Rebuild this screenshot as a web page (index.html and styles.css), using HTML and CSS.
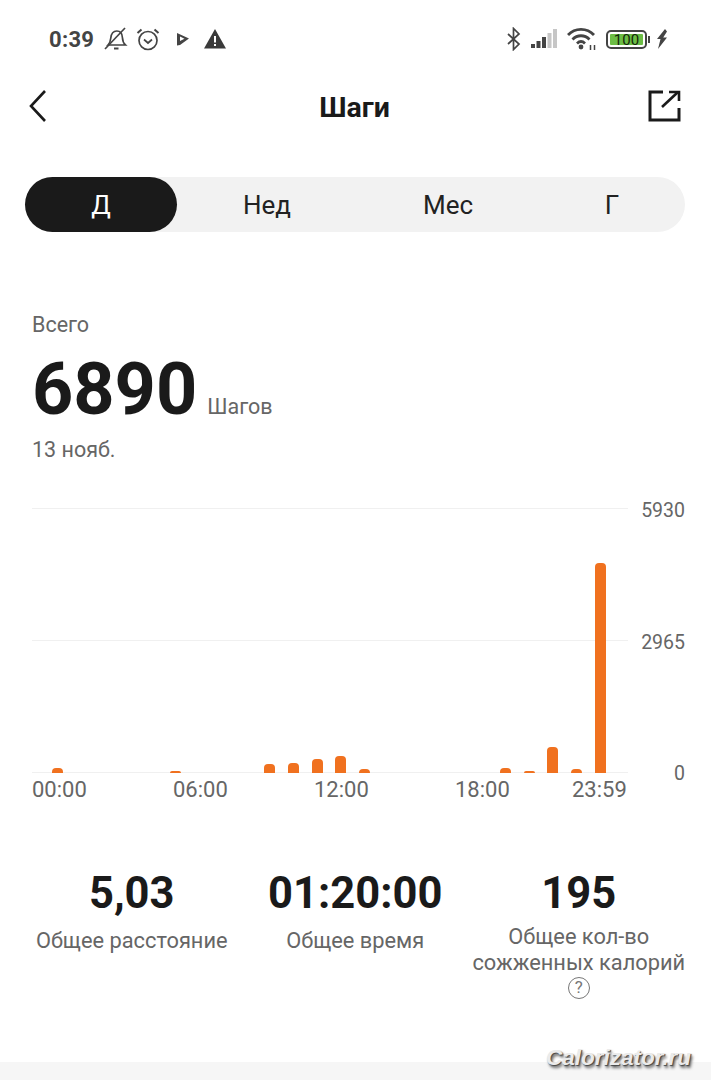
FILE: index.html
```html
<!doctype html>
<html lang="ru">
<head>
  <meta charset="UTF-8">
  <meta name="viewport" content="width=device-width, initial-scale=1.0">
  <title>Шаги</title>
  <link rel="stylesheet" href="styles.css">
</head>
<body>
  <div class="phone">
    <!-- status bar -->
    <div class="status">
      <div class="status-left">
        <span class="clock">0:39</span>
        <svg class="ic-bell" width="24" height="26" viewBox="0 0 24 26" fill="none" stroke="#444" stroke-width="1.7">
          <path d="M4 19c2-2 2.500-4 2.800-7 .4-4 2.400-7 6-7 3.400 0 5.400 2.800 5.600 6.500.2 3.500 1 5.700 3 7.500z"/>
          <path d="M1 23L21 2"/>
          <path d="M10 22.500h4.500" stroke-width="2"/>
        </svg>
        <svg class="ic-alarm" width="24" height="24" viewBox="0 0 24 24" fill="none" stroke="#444" stroke-width="1.7">
          <circle cx="12" cy="13.500" r="9"/>
          <path d="M8 12.500l4 3.500 4-3.500"/>
          <path d="M1.500 6l4-3.500M22.500 6l-4-3.500" stroke-width="2"/>
        </svg>
        <svg class="ic-play" width="12" height="14" viewBox="0 0 12 14">
          <path d="M0 1l12 5.500L3 13l-3 .5zM3 4.500v4.500l4.500-2.300z" fill="#444" fill-rule="evenodd"/>
        </svg>
        <svg class="ic-warn" width="22" height="20" viewBox="0 0 22 20">
          <path d="M11 0l11 19.500H0z" fill="#3a3a3a"/>
          <path d="M10 7h2v6.500h-2zM10 15h2v2h-2z" fill="#fff"/>
        </svg>
      </div>
      <div class="status-right">
        <svg class="ic-bt" width="16" height="24" viewBox="0 0 16 24" fill="none" stroke="#444" stroke-width="1.700">
          <path d="M2 7l11 10-5.500 5.500v-21L13 7 2 17"/>
        </svg>
        <svg class="ic-signal" width="26" height="20" viewBox="0 0 26 20">
          <rect x="0" y="15" width="4" height="4" fill="#444"/>
          <rect x="5.500" y="12" width="4" height="7" fill="#444"/>
          <rect x="11" y="8" width="4" height="11" fill="#444"/>
          <rect x="16.500" y="4" width="4" height="15" fill="#c6c6c6"/>
          <rect x="22" y="0" width="4" height="19" fill="#c6c6c6"/>
        </svg>
        <svg class="ic-wifi" width="30" height="24" viewBox="0 0 30 24" fill="none" stroke="#444" stroke-width="2.800">
          <path d="M1 8c7-7.500 19-7.500 26 0"/>
          <path d="M5.500 12.500c4.800-5 12.200-5 17 0"/>
          <path d="M10 16.500c2.500-2.400 5.500-2.400 8 0"/>
          <circle cx="14" cy="20" r="2.400" fill="#444" stroke="none"/>
          <path d="M23.500 23v-5M27.500 23v-5" stroke-width="1.500"/>
        </svg>
        <div class="battery">
          <div class="battery-body"><span class="battery-fill">100</span></div>
          <div class="battery-tip"></div>
        </div>
        <svg class="ic-bolt" width="12" height="20" viewBox="0 0 12 20">
          <path d="M9 0L1 10h3.500L2 20l9-11.500H7.200L11 2.500z" fill="#444"/>
        </svg>
      </div>
    </div>

    <!-- title bar -->
    <div class="header">
      <svg class="ic-back" width="20" height="34" viewBox="0 0 20 34" fill="none" stroke="#1a1a1a" stroke-width="2.600">
        <path d="M17 2L3 17l14 15"/>
      </svg>
      <h1 class="title">Шаги</h1>
      <svg class="ic-share" width="34" height="34" viewBox="0 0 34 34" fill="none" stroke="#1a1a1a" stroke-width="3">
        <path d="M16 3H3v28h29V19"/>
        <path d="M15 18L31 3" stroke-width="2.600"/>
        <path d="M22 3h10v9" stroke-width="2.600"/>
      </svg>
    </div>

    <!-- period tabs -->
    <div class="tabs">
      <div class="tab tab-active">Д</div>
      <div class="tab tab-week">Нед</div>
      <div class="tab tab-month">Мес</div>
      <div class="tab tab-year">Г</div>
    </div>

    <div class="summary">
      <div class="summary-label">Всего</div>
      <div class="summary-main">
        <span class="summary-value">6890</span>
        <span class="summary-unit">Шагов</span>
      </div>
      <div class="summary-date">13 нояб.</div>
    </div>

    <!-- chart -->
    <div class="chart">
      <div class="plot">
        <div class="gridlines">
          <div class="gridline"></div>
          <div class="gridline"></div>
          <div class="gridline"></div>
        </div>
        <div class="bars" id="bars"></div>
      </div>
      <div class="y-axis">
        <span>5930</span>
        <span>2965</span>
        <span>0</span>
      </div>
    </div>
    <div class="x-axis">
      <span>00:00</span>
      <span>06:00</span>
      <span>12:00</span>
      <span>18:00</span>
      <span>23:59</span>
    </div>

    <!-- totals -->
    <div class="stats">
      <div class="stat">
        <div class="stat-value">5,03</div>
        <div class="stat-label">Общее расстояние</div>
      </div>
      <div class="stat">
        <div class="stat-value">01:20:00</div>
        <div class="stat-label">Общее время</div>
      </div>
      <div class="stat">
        <div class="stat-value">195</div>
        <div class="stat-label stat-label-long">Общее кол-во<br>сожженных калорий</div>
        <div class="help">?</div>
      </div>
    </div>

    <div class="footer">
      <span class="watermark">Calorizator.ru</span>
    </div>
  </div>

  <script>
    // steps per hour, drawn in px
    const hours = [5, 0, 0, 0, 0, 2, 0, 0, 0, 9, 10, 14, 17, 4, 0, 0, 0, 0, 0, 5, 2, 26, 4, 210];
    const bars = document.getElementById("bars");

    hours.forEach((h) => {
      const slot = document.createElement("div");
      slot.className = "slot";
      if (h > 0) {
        const bar = document.createElement("div");
        bar.className = "bar";
        bar.style.height = h + "px";
        slot.appendChild(bar);
      }
      bars.appendChild(slot);
    });
  </script>
</body>
</html>
```

FILE: styles.css
```css
* {
  box-sizing: border-box;
}

body {
  margin: 0;
  background-color: #fff;
  color: #1a1a1a;
  font-family: Roboto, "Noto Sans", sans-serif;
}

.phone {
  position: relative;
  width: 711px;
  height: 1080px;
  overflow: hidden;
  display: flex;
  flex-direction: column;
}

/* status bar */
.status {
  height: 78px;
  padding: 0 43px 0 49px;
  display: flex;
  justify-content: space-between;
  align-items: center;
}

.status-left, .status-right {
  display: flex;
  align-items: center;
}

.clock {
  font-size: 22px;
  font-weight: 700;
  color: #444;
  letter-spacing: 0.3px;
}

.ic-bell { margin-left: 10px; }
.ic-alarm { margin-left: 8px; }
.ic-play { margin-left: 17px; }
.ic-warn { margin-left: 15px; }
.ic-signal { margin-left: 9px; }
.ic-wifi { margin-left: 10px; }
.ic-bolt { margin-left: 6px; }

.battery {
  display: flex;
  align-items: center;
  margin-left: 9px;
}

.battery-body {
  width: 41px;
  height: 19px;
  padding: 2px;
  border: 2px solid #444;
  border-radius: 5px;
  display: flex;
}

.battery-fill {
  flex: 1;
  background-color: #6cbd45;
  border-radius: 1px;
  font-size: 15px;
  line-height: 12px;
  text-align: center;
  color: #12280a;
}

.battery-tip {
  width: 2px;
  height: 7px;
  margin-left: 1px;
  background-color: #444;
}

/* title bar */
.header {
  height: 56px;
  padding: 0 30px 0 28px;
  display: grid;
  grid-template-columns: 1fr auto 1fr;
  align-items: center;
}

.ic-share {
  justify-self: end;
}

.title {
  margin: 2px 0 0;
  font-size: 28.500px;
  font-weight: 700;
  color: #1a1a1a;
}

/* tabs */
.tabs {
  height: 55px;
  margin: 43px 26px 0 25px;
  background-color: #f2f2f2;
  border-radius: 28px;
  display: flex;
  align-items: center;
  font-size: 26px;
  color: #222;
}

.tab {
  height: 100%;
  display: flex;
  align-items: center;
  justify-content: center;
}

.tab-active {
  width: 152px;
  background-color: #1a1a1a;
  color: #fff;
  border-radius: 28px;
}

.tab-week { width: 180px; }
.tab-month { width: 182px; }
.tab-year { width: 146px; }

/* summary */
.summary {
  margin: 80px 0 0 32px;
}

.summary-label, .summary-date {
  font-size: 21.500px;
  color: #666;
}

.summary-main {
  display: flex;
  align-items: baseline;
  margin-top: 11px;
}

.summary-value {
  font-size: 72px;
  line-height: 84px;
  font-weight: 700;
  color: #1a1a1a;
}

.summary-unit {
  margin-left: 10px;
  font-size: 21.500px;
  color: #666;
}

.summary-date {
  margin-top: 5px;
}

/* chart */
.chart {
  display: flex;
  margin: 46px 26px 0 32px;
}

.plot {
  position: relative;
  width: 596px;
  height: 265px;
}

.gridlines {
  height: 100%;
  display: flex;
  flex-direction: column;
  justify-content: space-between;
}

.gridline {
  height: 1px;
  background-color: #f0f0f0;
}

.bars {
  position: absolute;
  left: 14px;
  right: 16px;
  bottom: 0;
  height: 100%;
  display: flex;
  align-items: flex-end;
}

.slot {
  flex: 1;
  display: flex;
  justify-content: center;
}

.bar {
  width: 11px;
  background-color: #f0711f;
  border-radius: 4px 4px 0 0;
}

.y-axis {
  flex: 1;
  margin: -8px 0 -12px 13px;
  display: flex;
  flex-direction: column;
  justify-content: space-between;
  align-items: flex-end;
  font-size: 19.500px;
  line-height: 22px;
  color: #666;
}

.x-axis {
  margin: 4px 0 0 32px;
  display: grid;
  grid-template-columns: 141px 141px 141px 117px auto;
  justify-content: start;
  font-size: 22px;
  line-height: 25px;
  color: #666;
}

/* totals */
.stats {
  margin-top: 67px;
  padding-left: 20px;
  display: flex;
  text-align: center;
}

.stat {
  width: 223.500px;
  display: flex;
  flex-direction: column;
  align-items: center;
}

.stat-value {
  font-size: 43.500px;
  line-height: 50px;
  font-weight: 700;
  color: #1a1a1a;
}

.stat-label {
  margin-top: 9px;
  font-size: 21.800px;
  line-height: 26px;
  color: #666;
}

.stat-label-long {
  margin-top: 5px;
}

.help {
  width: 22px;
  height: 22px;
  margin-top: 1px;
  border: 1.500px solid #777;
  border-radius: 50%;
  font-size: 17px;
  line-height: 19px;
  color: #777;
}

/* bottom strip */
.footer {
  margin-top: auto;
  height: 18px;
  background-color: #f6f6f6;
}

.watermark {
  position: absolute;
  right: 20px;
  bottom: 10px;
  font-family: "Liberation Sans", sans-serif;
  font-size: 22.500px;
  line-height: 24px;
  font-weight: 700;
  font-style: italic;
  color: #ebebeb;
  text-shadow: 1px 1px 1px #444, 2px 3px 3px #666;
}
```
